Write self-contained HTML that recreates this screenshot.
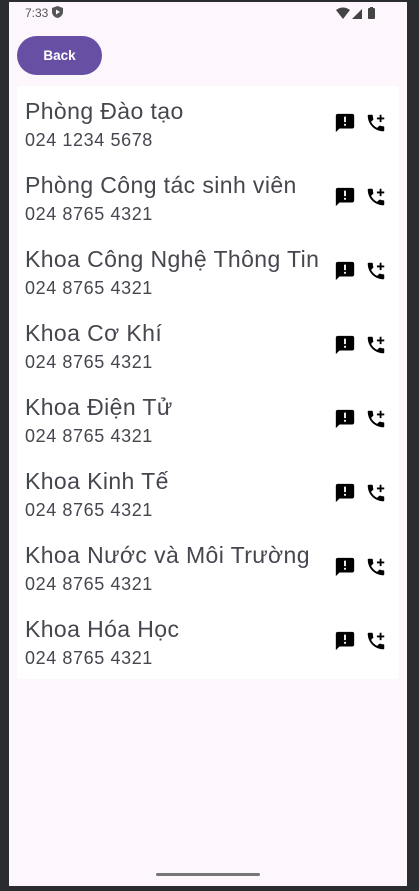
<!DOCTYPE html>
<html><head><meta charset="utf-8"><style>
*{margin:0;padding:0;box-sizing:border-box}
body{width:419px;height:891px;background:#2b2c30;overflow:hidden;font-family:"Liberation Sans","DejaVu Sans",sans-serif;position:relative}
.scr{position:absolute;left:9px;top:2px;width:398px;height:884px;background:#fdf7fd}
.time{position:absolute;left:16px;top:4px;font-size:12px;color:#555}
.btn{position:absolute;left:8px;top:34px;width:85px;height:39px;border-radius:20px;background:#6750a4;color:#fff;font-size:13.5px;font-weight:bold;text-align:center;line-height:39px}
.card{position:absolute;left:8px;top:84px;width:382px;height:593px;background:#fff;border-radius:3px}
.row{height:74px;position:relative}
.n{position:absolute;left:8px;top:12px;font-size:23px;color:#46464f;white-space:nowrap;letter-spacing:0.4px}
.p{position:absolute;left:8px;top:44px;font-size:18px;color:#46464f;letter-spacing:0.6px}
.ic{position:absolute;top:26px}
</style></head><body>
<div class="scr">
<div class="time">7:33 <svg width="11" height="12" viewBox="0 0 11 12" style="vertical-align:-1px"><path d="M5.5 0L11 2v4c0 3-2.5 5.3-5.5 6C2.5 11.3 0 9 0 6V2z" fill="#555"/><path d="M4 3.5v5l4-2.5z" fill="#fdf7fd"/></svg></div>
<svg style="position:absolute;left:327px;top:5px" width="50" height="13" viewBox="0 0 50 13"><path d="M0 3Q7-2 14 3L7 12z" fill="#444"/><path d="M16 12L26 2V12z" fill="#444"/><rect x="32" y="1" width="7" height="11" rx="1" fill="#444"/><rect x="34" y="0" width="3" height="2" fill="#444"/></svg>
<div class="btn">Back</div>
<div class="card" id="c"></div>
<div style="position:absolute;left:147px;top:871px;width:104px;height:3px;background:#777;border-radius:2px"></div>
</div>
<script>
var d=[["Phòng Đào tạo","024 1234 5678"],["Phòng Công tác sinh viên","024 8765 4321"],["Khoa Công Nghệ Thông Tin","024 8765 4321"],["Khoa Cơ Khí","024 8765 4321"],["Khoa Điện Tử","024 8765 4321"],["Khoa Kinh Tế","024 8765 4321"],["Khoa Nước và Môi Trường","024 8765 4321"],["Khoa Hóa Học","024 8765 4321"]];
var m='<svg class="ic" style="left:317px" width="22" height="22" viewBox="0 0 24 24"><path d="M20 2H4c-1.1 0-2 .9-2 2v18l4-4h14c1.1 0 2-.9 2-2V4c0-1.1-.9-2-2-2zm-7 9h-2V5h2v6zm0 4h-2v-2h2v2z"/></svg>';
var p='<svg class="ic" style="left:348px" width="22" height="22" viewBox="0 0 24 24"><path d="M20 15.5c-1.25 0-2.45-.2-3.57-.57-.35-.11-.74-.03-1.02.24l-2.2 2.2c-2.83-1.44-5.15-3.75-6.59-6.59l2.2-2.21c.28-.26.36-.65.25-1C8.7 6.45 8.5 5.25 8.5 4c0-.55-.45-1-1-1H4c-.55 0-1 .45-1 1 0 9.39 7.61 17 17 17 .55 0 1-.45 1-1v-3.5c0-.55-.45-1-1-1zM21 6h-3V3h-2v3h-3v2h3v3h2V8h3z"/></svg>';
var h='';d.forEach(function(r){h+='<div class="row"><div class="n">'+r[0]+'</div><div class="p">'+r[1]+'</div>'+m+p+'</div>'});
document.getElementById('c').innerHTML=h;
</script>
</body></html>
